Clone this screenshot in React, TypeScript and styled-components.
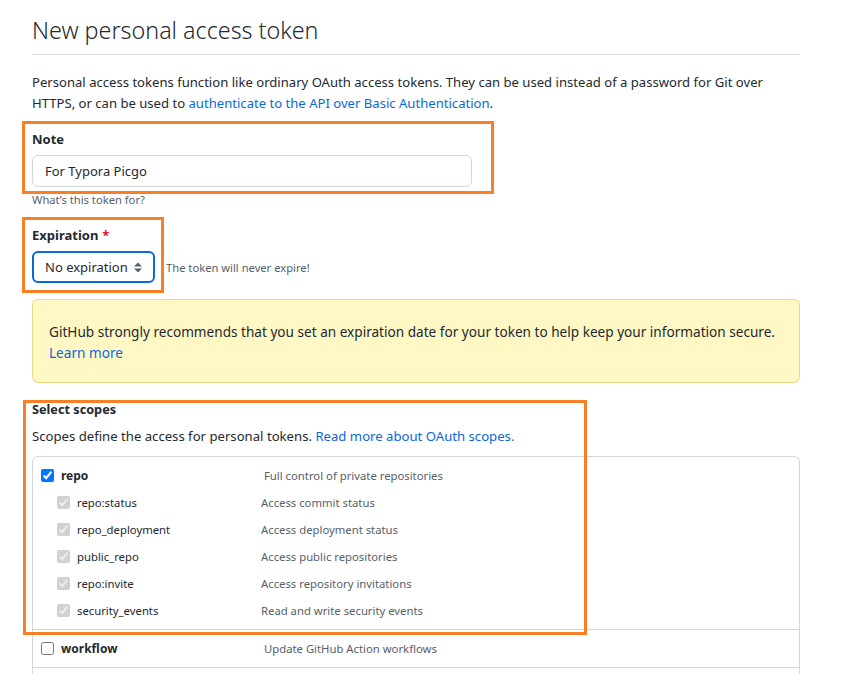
import React from "react";
import styled, { createGlobalStyle } from "styled-components";

const GlobalStyle = createGlobalStyle`
  html, body { margin: 0; padding: 0; background: #ffffff; }
  body {
    font-family: "Noto Sans", "Open Sans", sans-serif;
    color: #1f2328;
    font-size: 13px;
    line-height: 21px;
  }
  * { box-sizing: border-box; }
`;

const Page = styled.div`
  position: relative;
  width: 863px;
  height: 674px;
  padding: 12px 63px 0 32px;
  overflow: hidden;
`;

const Title = styled.h1`
  margin: 0;
  font-size: 23.3px;
  font-weight: 300;
  line-height: 36px;
  color: #24292f;
  padding-bottom: 6px;
  border-bottom: 1px solid #d8dee4;
`;

const Lead = styled.p`
  margin: 17px 0 0;
  font-size: 13.1px;
  line-height: 21px;
  color: #24292f;
`;

const Link = styled.a`
  color: #0969da;
  text-decoration: none;
`;

const FormGroup = styled.div<{ $top?: number }>`
  margin-top: ${(p) => p.$top ?? 15}px;
`;

const Label = styled.label`
  display: block;
  font-size: 13px;
  font-weight: 700;
  line-height: 21px;
  color: #24292f;
  margin-bottom: 5px;
`;

const Required = styled.span`
  color: #cf222e;
  margin-left: 4px;
`;

const TextInput = styled.div`
  width: 440px;
  height: 32px;
  border: 1px solid #d0d7de;
  border-radius: 6px;
  padding: 0 12px;
  display: flex;
  align-items: center;
  font-size: 13px;
  color: #24292f;
  background: #ffffff;
`;

const Note = styled.div`
  margin-top: 4px;
  font-size: 11.2px;
  line-height: 18px;
  color: #57606a;
`;

const SelectRow = styled.div`
  display: flex;
  align-items: center;
  gap: 11px;
`;

const Select = styled.div`
  width: 123px;
  height: 32px;
  border: 2px solid #0969da;
  border-radius: 6px;
  padding: 0 11px;
  display: flex;
  align-items: center;
  justify-content: space-between;
  font-size: 13px;
  color: #24292f;
`;

const InlineNote = styled.span`
  font-size: 11.2px;
  color: #57606a;
`;

const Flash = styled.div`
  margin-top: 16px;
  padding: 21px 16px 19px;
  background: #fff8c5;
  border: 1px solid rgba(212, 167, 44, 0.4);
  border-radius: 6px;
  font-size: 13.6px;
  line-height: 21px;
  color: #24292f;
`;

const SectionTitle = styled.div`
  margin-top: 16px;
  font-size: 12.7px;
  font-weight: 700;
  line-height: 21px;
  color: #24292f;
`;

const SectionDesc = styled.p`
  margin: 6px 0 0;
  font-size: 13.15px;
  line-height: 21px;
  color: #24292f;
`;

const ScopeTable = styled.div`
  margin-top: 9px;
  border: 1px solid #d0d7de;
  border-bottom: none;
  border-radius: 6px 6px 0 0;
`;

const ScopeGroup = styled.div<{ $minH?: number }>`
  padding: 5px 8px;
  min-height: ${(p) => p.$minH ?? 0}px;
  border-bottom: 1px solid #d0d7de;
`;

const ScopeRow = styled.div<{ $indent?: boolean }>`
  display: flex;
  align-items: center;
  height: 27px;
  padding-left: ${(p) => (p.$indent ? 16 : 0)}px;
`;

const Check = styled.input`
  margin: 0 7px 0 0;
  width: 13px;
  height: 13px;
  flex: none;
`;

const ScopeName = styled.span<{ $w: number; $bold?: boolean }>`
  width: ${(p) => p.$w}px;
  flex: none;
  font-size: ${(p) => (p.$bold ? 12 : 11.3)}px;
  font-weight: ${(p) => (p.$bold ? 700 : 400)};
  color: #24292f;
`;

const ScopeDesc = styled.span`
  font-size: 11.3px;
  color: #57606a;
`;

const Highlight = styled.div<{ $x: number; $y: number; $w: number; $h: number }>`
  position: absolute;
  left: ${(p) => p.$x}px;
  top: ${(p) => p.$y}px;
  width: ${(p) => p.$w}px;
  height: ${(p) => p.$h}px;
  border: 3px solid #f97f27;
  pointer-events: none;
`;

const SelectArrows = () => (
  <svg width="8" height="11" viewBox="0 0 8 11" aria-hidden="true">
    <path d="M0 4.5 L4 0.5 L8 4.5 Z" fill="#57606a" />
    <path d="M0 6.5 L8 6.5 L4 10.5 Z" fill="#57606a" />
  </svg>
);

const subScopes = [
  ["repo:status", "Access commit status"],
  ["repo_deployment", "Access deployment status"],
  ["public_repo", "Access public repositories"],
  ["repo:invite", "Access repository invitations"],
  ["security_events", "Read and write security events"],
];

export default function App() {
  return (
    <>
      <GlobalStyle />
      <Page>
        <Title>New personal access token</Title>
        <Lead>
          Personal access tokens function like ordinary OAuth access tokens. They can be used instead of a password
          for Git over HTTPS, or can be used to{" "}
          <Link href="#">authenticate to the API over Basic Authentication</Link>.
        </Lead>

        <FormGroup>
          <Label>Note</Label>
          <TextInput>For Typora Picgo</TextInput>
          <Note>What’s this token for?</Note>
        </FormGroup>

        <FormGroup $top={16}>
          <Label>
            Expiration<Required>*</Required>
          </Label>
          <SelectRow>
            <Select>
              <span>No expiration</span>
              <SelectArrows />
            </Select>
            <InlineNote>The token will never expire!</InlineNote>
          </SelectRow>
        </FormGroup>

        <Flash>
          GitHub strongly recommends that you set an expiration date for your token to help keep your information
          secure.
          <br />
          <Link href="#">Learn more</Link>
        </Flash>

        <SectionTitle>Select scopes</SectionTitle>
        <SectionDesc>
          Scopes define the access for personal tokens. <Link href="#">Read more about OAuth scopes.</Link>
        </SectionDesc>

        <ScopeTable>
          <ScopeGroup>
            <ScopeRow>
              <Check type="checkbox" checked readOnly />
              <ScopeName $w={203} $bold>
                repo
              </ScopeName>
              <ScopeDesc>Full control of private repositories</ScopeDesc>
            </ScopeRow>
            {subScopes.map(([name, desc]) => (
              <ScopeRow $indent key={name}>
                <Check type="checkbox" checked disabled readOnly />
                <ScopeName $w={184}>{name}</ScopeName>
                <ScopeDesc>{desc}</ScopeDesc>
              </ScopeRow>
            ))}
          </ScopeGroup>
          <ScopeGroup>
            <ScopeRow>
              <Check type="checkbox" readOnly />
              <ScopeName $w={203} $bold>
                workflow
              </ScopeName>
              <ScopeDesc>Update GitHub Action workflows</ScopeDesc>
            </ScopeRow>
          </ScopeGroup>
          <ScopeGroup $minH={37} />
        </ScopeTable>

        <Highlight $x={22} $y={121} $w={472} $h={73} />
        <Highlight $x={22} $y={217} $w={142} $h={76} />
        <Highlight $x={23} $y={400} $w={564} $h={235} />
      </Page>
    </>
  );
}
